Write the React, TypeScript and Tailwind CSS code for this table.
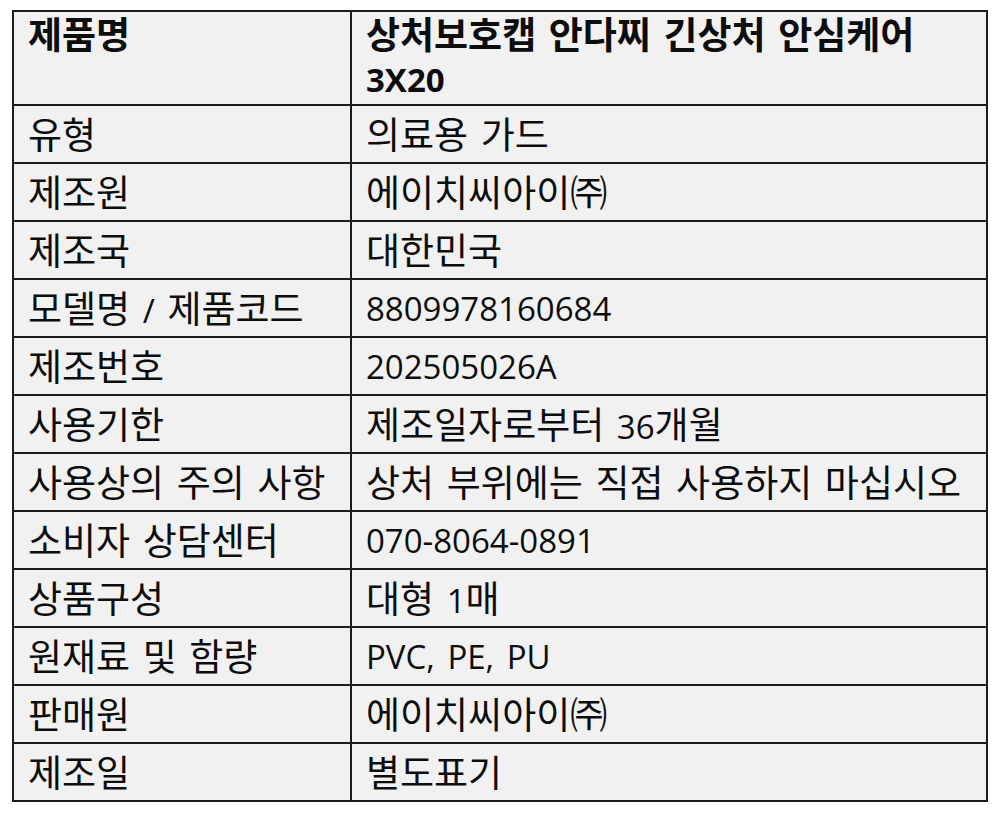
const rows: [string, string][] = [
  ["유형", "의료용 가드"],
  ["제조원", "에이치씨아이㈜"],
  ["제조국", "대한민국"],
  ["모델명 / 제품코드", "8809978160684"],
  ["제조번호", "202505026A"],
  ["사용기한", "제조일자로부터 36개월"],
  ["사용상의 주의 사항", "상처 부위에는 직접 사용하지 마십시오"],
  ["소비자 상담센터", "070-8064-0891"],
  ["상품구성", "대형 1매"],
  ["원재료 및 함량", "PVC, PE, PU"],
  ["판매원", "에이치씨아이㈜"],
  ["제조일", "별도표기"],
];

// hangul runs are set a bit larger than latin so widths match the original
const Txt = ({ text }: { text: string }) => (
  <>
    {text.split(/([\uAC00-\uD7A3\u321C]+)/).map((part, i) =>
      /[\uAC00-\uD7A3\u321C]/.test(part) ? (
        <span key={i} className="text-[37px]">
          {part}
        </span>
      ) : (
        <span key={i}>{part}</span>
      )
    )}
  </>
);

const cell = "border-2 border-[#1c1c1c] pl-[14px] whitespace-nowrap";

export default function App() {
  return (
    <div
      className="w-[1000px] h-[814px] bg-white pt-[10px] pl-[12px]"
      style={{ fontFamily: '"Open Sans", "Noto Sans CJK KR", sans-serif' }}
    >
      <table className="border-collapse border-2 border-[#1c1c1c] bg-[#f1f1f1] text-[#0d0d0d] text-[33px] w-[974px] table-fixed [word-spacing:4px]">
        <colgroup>
          <col className="w-[338px]" />
          <col className="w-[636px]" />
        </colgroup>
        <tbody>
          <tr className="h-[94px]">
            <td className={`${cell} align-top pt-[1px] font-bold leading-[43px]`}>
              <Txt text="제품명" />
            </td>
            <td className={`${cell} align-top pt-[1px] font-bold leading-[43px]`}>
              <Txt text="상처보호캡 안다찌 긴상처 안심케어" />
              <br />
              <Txt text="3X20" />
            </td>
          </tr>
          {rows.map(([k, v]) => (
            <tr key={k} className="h-[58px]">
              <td className={`${cell} leading-none`}>
                <Txt text={k} />
              </td>
              <td className={`${cell} leading-none`}>
                <Txt text={v} />
              </td>
            </tr>
          ))}
        </tbody>
      </table>
    </div>
  );
}
